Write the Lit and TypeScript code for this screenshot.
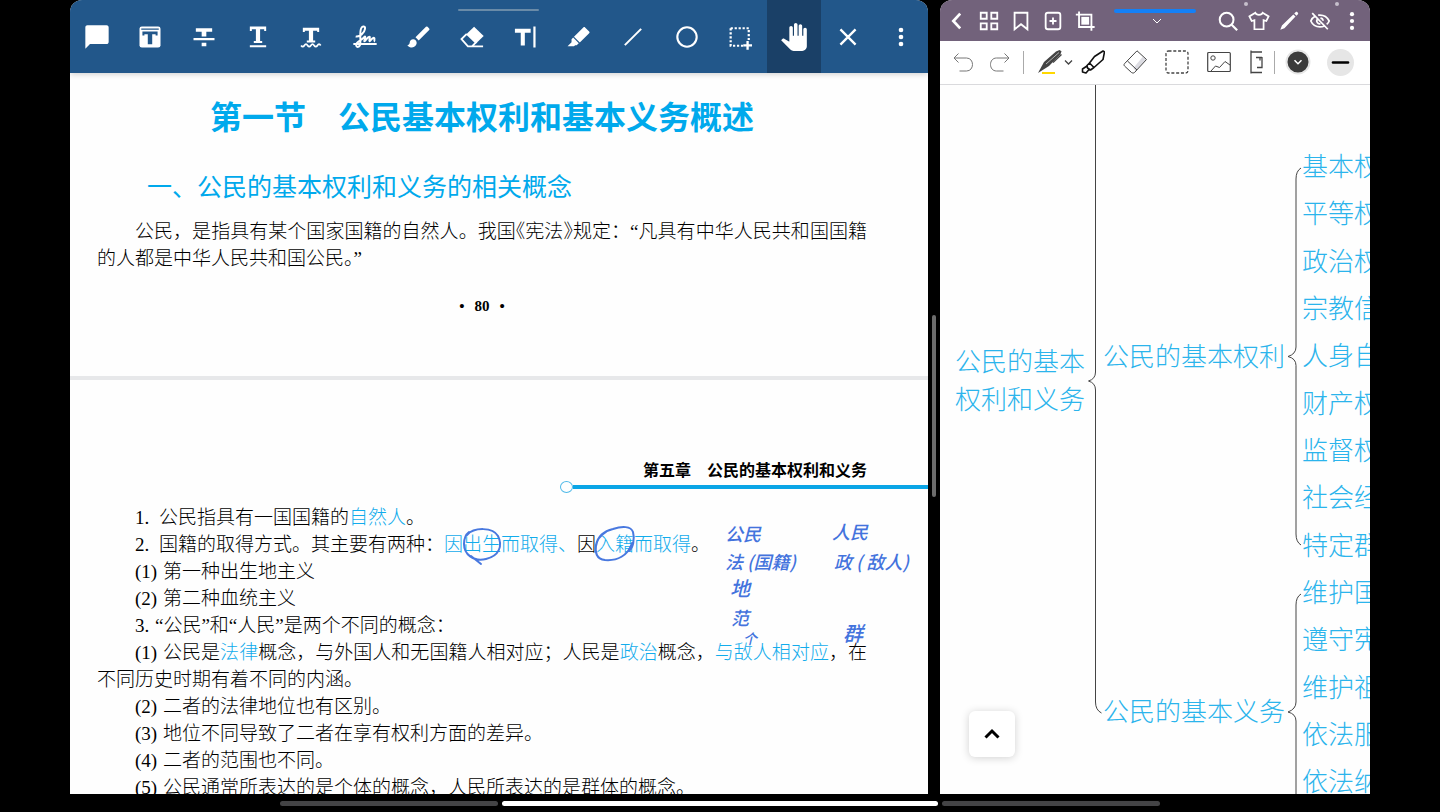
import { LitElement, html, svg, css } from "lit";
import { customElement, state } from "lit/decorators.js";

const markupTools = [
  { id: "note", label: "批注", icon: svg`<path class="fill" d="M20.2 2H3.8C2.8 2 2 2.8 2 3.8V22l4-4h14.2c1 0 1.8-.8 1.8-1.8V3.8c0-1-.8-1.8-1.8-1.8z"/>` },
  { id: "highlight-text", label: "高亮文本", icon: svg`<rect class="fill" x="3" y="3" width="18" height="18" rx="2"/><path class="cut" d="M4.500 4.800h15v1h-15zM5.500 7.200h13v3.600h-1.700V9.600h-2.900v8.600h-3.800V9.600H7.200v1.200H5.500z"/>` },
  { id: "strike", label: "删除线", icon: svg`<path class="fill" d="M5 4.500h14v3h-5v4h-4v-4H5zM3 12.8h18v2H3zM10 17h4v3h-4z"/>` },
  { id: "underline", label: "下划线", icon: svg`<path class="fill" d="M5 3h14v3.800h-1.700V5.300h-3.500v10.200h1.800v1.700H8.400v-1.700h1.800V5.300H6.700v1.500H5zM5 19h14v1.700H5z"/>` },
  { id: "squiggle", label: "波浪线", icon: svg`<path class="fill" d="M5 4h14v3.800h-1.700V6.600h-3.500V15h1.800v1.800H8.400V15h1.800V6.600H6.700v1.200H5z"/><path d="M3.500 19.200q1.400 2 2.800 0t2.800 0t2.800 0t2.800 0t2.800 0t2.800 0" stroke-width="1.500"/>` },
  { id: "sign", label: "签名", icon: svg`<path stroke-width="1.700" d="M4 11.500c3.500.8 7.500-3 8-6.500.3-2.200-2-2.800-3.200-.6C7.300 7.200 8.300 12 8 17c-.2 4.300-3.500 4.300-3.600 1.800C4.300 16 8 15.600 10.200 13.200c1-1.100 1.600-2 2-1.400.5.800-1.300 3.600-.8 3.900.8.400 2.800-4 4.300-4 1.200 0-.7 3.600.2 3.900.8.200 1.900-3 3.600-3 1.300.1-.2 2.700 1 3.400M2 18h20"/>` },
  { id: "brush", label: "画笔", icon: svg`<path class="fill" d="M7 14c-1.660 0-3 1.340-3 3 0 1.310-1.160 2-2 2 .92 1.220 2.490 2 4 2 2.210 0 4-1.790 4-4 0-1.660-1.340-3-3-3zm13.710-9.370l-1.340-1.340a1 1 0 0 0-1.410 0L9 12.250 11.750 15l8.960-8.960a1 1 0 0 0 0-1.410z"/>` },
  { id: "eraser", label: "橡皮擦", icon: svg`<path class="fill" d="M13.800 3.300 22 11.200l-6.800 6.600-8.300-8z"/><path d="M7.500 9.300 3 13.800 8.500 20H21.500M8 20h4l4-4" stroke-width="1.600"/>` },
  { id: "text", label: "文本", icon: svg`<path class="fill" d="M2.500 5h13.500v3.300h-5v11H7.500v-11h-5zM18.300 3h1.900v18h-1.900z"/>` },
  { id: "marker", label: "荧光笔", icon: svg`<path class="fill" d="M17.200 3.800 20.700 7.200c.5.500.5 1 0 1.500l-8 8-5-5 8-7.900c.5-.5 1-.5 1.500 0zM7 12.500l4.800 4.800-1.800 1.700-1.300 0L7.700 20H2.200L5.600 16.400v-2.400z"/>` },
  { id: "line", label: "直线", icon: svg`<path d="M5 19 19 5" stroke-width="1.700"/>` },
  { id: "shape", label: "圆形", icon: svg`<circle cx="12" cy="12" r="8.300" stroke-width="1.800"/>` },
  { id: "select", label: "区域选择", icon: svg`<path d="M4 4.500h15.500v10M4 4.500V19.500H15" stroke-width="1.900" stroke-dasharray="1.900 1.500"/><path d="M18.500 15.500v7.500M14.800 19.200h7.500" stroke-width="2"/>` },
  { id: "pan", label: "拖动", icon: svg`<path class="fill" d="M23 5.500V20c0 2.200-1.800 4-4 4h-7.300c-1.080 0-2.100-.43-2.850-1.190L1 14.830s1.260-1.230 1.300-1.250c.22-.19.49-.29.79-.29.22 0 .42.060.6.160.04.010 4.310 2.460 4.310 2.460V4c0-.83.670-1.500 1.500-1.500S11 3.170 11 4v7h1V1.500c0-.83.670-1.500 1.500-1.500S15 .67 15 1.500V11h1V2.500c0-.83.670-1.500 1.500-1.500s1.500.67 1.500 1.500V11h1V5.500c0-.83.670-1.500 1.500-1.500s1.500.67 1.500 1.500z"/>` },
  { id: "close", label: "关闭", icon: svg`<path d="M5.500 5.500 18.500 18.500M18.500 5.500 5.500 18.500" stroke-width="2"/>` },
  { id: "more", label: "更多", icon: svg`<circle class="fill" cx="12" cy="6" r="2"/><circle class="fill" cx="12" cy="12" r="2"/><circle class="fill" cx="12" cy="18" r="2"/>` },
];

@customElement("pdf-pane")
class PdfPane extends LitElement {
  static styles = css`
    :host {
      position: relative;
      display: flex;
      flex-direction: column;
      overflow: hidden;
      border-radius: 12px 12px 0 0;
      background: #fefefe;
      color: #000;
      font-family: "Liberation Serif", "Noto Sans CJK SC", serif;
    }
    .bar {
      display: flex;
      flex: none;
      height: 73px;
      background: #22578a;
      box-shadow: 0 1px 6px rgba(0, 0, 0, 0.2);
      z-index: 1;
    }
    .tool {
      flex: 1;
      display: grid;
      place-items: center;
      border: 0;
      padding: 0;
      background: none;
      color: #fff;
    }
    .tool.on { background: #1a4067; }
    .tool svg { width: 28px; height: 28px; fill: none; stroke: currentColor; }
    .fill { fill: currentColor; stroke: none; }
    .cut { fill: #22578a; stroke: none; }
    .grip {
      position: absolute;
      top: 9px;
      left: 388px;
      width: 81px;
      height: 2px;
      border-radius: 1px;
      background: #6a8ba8;
      z-index: 2;
    }
    .scroll { flex: 1; min-height: 0; overflow: hidden; }
    .page { position: relative; padding: 0 61px 0 27px; }
    .first { padding-top: 20px; padding-bottom: 60px; border-bottom: 4px solid #e7e8ea; }
    .second { padding-top: 81px; }
    h1, h2, p { margin: 0; font-family: "Noto Sans CJK SC", sans-serif; }
    h1 { text-align: center; font-size: 32px; line-height: 44px; font-weight: 700; color: #00a9ec; }
    h2 { margin-top: 31px; padding-left: 50px; font-size: 25px; line-height: 34px; font-weight: 400; color: #00a9ec; }
    p { font-family: inherit; font-size: 19px; line-height: 27px; text-indent: 38px; text-align: justify; font-weight: 300; }
    .lead { margin-top: 16px; }
    .half { font-feature-settings: "halt"; }
    .folio { margin-top: 24px; text-align: center; font-size: 15px; line-height: 20px; font-weight: 700; }
    .folio span { margin: 0 10px; }
    .chapter { text-align: right; font-size: 16px; line-height: 20px; font-weight: 700; }
    .rule { display: flex; align-items: center; width: 368px; height: 12px; margin: 0 -61px 11px auto; }
    .knob { box-sizing: border-box; width: 13px; height: 12px; border: 1px solid #4fb9e8; border-radius: 50%; }
    .stroke { flex: 1; height: 4px; background: #0aa5e6; }
    .num { display: inline-block; min-width: 28px; text-indent: 0; }
    .dot { min-width: 24px; }
    .near { min-width: 20px; }
    .key { color: #12acec; }
    .ink { position: absolute; color: #4373dd; font: italic 500 18px/24px "Noto Sans CJK SC", sans-serif; white-space: nowrap; }
    .small { font-size: 14px; }
    .big { font-size: 20px; }
    .ring { position: absolute; left: 390px; top: 142px; width: 180px; height: 48px; fill: none; stroke: #4878df; stroke-width: 2; stroke-linecap: round; }
  `;

  @state() active = "pan";

  notes = [
    { text: "公民", x: 655, y: 141, size: "" },
    { text: "法 (国籍)", x: 655, y: 169, size: "" },
    { text: "地", x: 660, y: 196, size: "big" },
    { text: "范", x: 661, y: 225, size: "" },
    { text: "个", x: 673, y: 246, size: "small" },
    { text: "人民", x: 762, y: 139, size: "" },
    { text: "政 ( 敌人)", x: 764, y: 169, size: "" },
    { text: "群", x: 773, y: 241, size: "big" },
  ];

  render() {
    return html`
      <span class="grip"></span>
      <div class="bar" role="toolbar" aria-label="批注工具">
        ${markupTools.map(
          (t) => html`<button class="tool ${t.id === this.active ? "on" : ""}" aria-label=${t.label} @click=${() => (this.active = t.id)}>
            <svg viewBox="0 0 24 24">${t.icon}</svg>
          </button>`
        )}
      </div>
      <div class="scroll" lang="zh-CN">
        <section class="page first">
          <h1>第一节　公民基本权利和基本义务概述</h1>
          <h2>一、公民的基本权利和义务的相关概念</h2>
          <p class="lead">公民，是指具有某个国家国籍的自然人。我国<span class="half">《</span>宪法<span class="half">》</span>规定：“凡具有中华人民共和国国籍的人都是中华人民共和国公民<span class="half">。</span>”</p>
          <div class="folio">•<span>80</span>•</div>
        </section>
        <section class="page second">
          <div class="chapter">第五章　公民的基本权利和义务</div>
          <div class="rule"><span class="knob"></span><span class="stroke"></span></div>
          <p><span class="num dot">1.</span>公民指具有一国国籍的<span class="key">自然人</span>。</p>
          <p><span class="num dot">2.</span>国籍的取得方式。其主要有两种：<span class="key">因出生而取得、</span>因<span class="key">入籍而取得</span>。</p>
          <p><span class="num">(1)</span>第一种出生地主义</p>
          <p><span class="num">(2)</span>第二种血统主义</p>
          <p><span class="num near">3.</span>“公民”和“人民”是两个不同的概念：</p>
          <p><span class="num">(1)</span>公民是<span class="key">法律</span>概念，与外国人和无国籍人相对应；人民是<span class="key">政治</span>概念，<span class="key">与敌人相对应</span>，在不同历史时期有着不同的内涵。</p>
          <p><span class="num">(2)</span>二者的法律地位也有区别。</p>
          <p><span class="num">(3)</span>地位不同导致了二者在享有权利方面的差异。</p>
          <p><span class="num">(4)</span>二者的范围也不同。</p>
          <p><span class="num">(5)</span>公民通常所表达的是个体的概念，人民所表达的是群体的概念。</p>
          <svg class="ring" viewBox="0 0 180 48">
            <path d="M7 13C14 5 33 5 38 14c5 10 1 20-12 23C13 40 4 32 4 22 4 17 5 13 9 10M11 34l10 8"/>
            <path d="M172 21C168 34 157 39 145 38c-9-1-10-8-9-15 2-9 8-14 17-16 9-3 18-3 20 3 2 7 0 16-4 19M146 10c-5 3-9 7-10 14"/>
          </svg>
          ${this.notes.map((n) => html`<span class="ink ${n.size}" style="left:${n.x}px;top:${n.y}px">${n.text}</span>`)}
        </section>
      </div>
    `;
  }
}

const headLeft = [
  { label: "返回", icon: svg`<path d="M15.500 4 8 12l7.500 8" stroke-width="3"/>` },
  { label: "缩略图", icon: svg`<path d="M3 3h6.500v6.500H3zM14.500 3H21v6.500h-6.500zM3 14.500h6.500V21H3zM14.500 14.500H21V21h-6.500z" stroke-width="2"/>` },
  { label: "书签", icon: svg`<path d="M5 3h14v18l-7-5.500L5 21z" stroke-width="2"/>` },
  { label: "添加", icon: svg`<rect x="4" y="3" width="16" height="18" rx="2.500" stroke-width="2"/><path d="M12 8.200v7.600M8.200 12h7.600" stroke-width="2"/>` },
  { label: "裁剪", icon: svg`<path d="M5.500 1.500V18.500H22.500M2 5H19v17.500" stroke-width="2"/><path class="fill" d="M8 7.500h8.500V16H8z"/>` },
];

const headRight = [
  { label: "搜索", icon: svg`<circle cx="10.500" cy="10.500" r="7.500" stroke-width="2.200"/><path d="M16 16l6 6" stroke-width="2.400"/>` },
  { label: "主题", icon: svg`<path d="M8 3 1.500 7l2.500 5 3-1v10h10V11l3 1 2.500-5L16 3c-1 3-7 3-8 0z" stroke-width="1.900"/>` },
  { label: "编辑", icon: svg`<path class="fill" d="m2.500 21.500 1.800-4.700L16.700 4.800l2.400 2.400L7 19.800zM17.700 3.800l1.700-1.500c.7-.6 1.300-.4 1.800.1l.5.500c.5.600.5 1.200 0 1.800l-1.500 1.600z"/>` },
  { label: "隐藏", icon: svg`<path d="M7 6.500C4.500 7.800 2.800 9.800 2 12c2 4.500 5.500 6.500 10 6.500 1.800 0 3.400-.4 4.800-1.100M10 5.600c5.500-.6 9.800 1.800 12 6.400-.6 1.500-1.500 2.700-2.700 3.700M9 10c-1.600 2.500.5 5.500 3.500 5M12.500 8.800c1.800.2 2.800 1.400 2.900 3M3.500 3.500l17 17.500" stroke-width="1.900"/>` },
  { label: "更多", icon: svg`<circle class="fill" cx="12" cy="4.500" r="2.300"/><circle class="fill" cx="12" cy="12" r="2.300"/><circle class="fill" cx="12" cy="19.500" r="2.300"/>` },
];

const COL = 362;
const ROWS = ["基本权", "平等权", "政治权", "宗教信", "人身自", "财产权", "监督权", "社会经", "特定群", "维护国", "遵守宪", "维护祖", "依法服", "依法纳"];

@customElement("note-pane")
class NotePane extends LitElement {
  static styles = css`
    :host {
      position: relative;
      display: flex;
      flex-direction: column;
      overflow: hidden;
      border-radius: 12px 12px 0 0;
      background: #fefefe;
      font-family: "Noto Sans CJK SC", sans-serif;
    }
    button { display: grid; place-items: center; border: 0; padding: 0; background: none; color: inherit; }
    svg { fill: none; stroke: currentColor; }
    .fill { fill: currentColor; stroke: none; }
    .head { display: flex; flex: none; align-items: center; height: 41px; padding: 0 2px 0 1px; background: #72627b; color: #fff; }
    .head button { width: 32px; height: 41px; }
    .head svg { width: 22px; height: 22px; }
    .head .title { flex: 1; width: auto; }
    .head .title svg { width: 10px; height: 10px; }
    .head .tight { width: 30px; }
    .tab { position: absolute; top: 9px; left: 174px; width: 82px; height: 4px; border-radius: 2px; background: #1480f6; }
    .pip { position: absolute; top: 2px; right: 122px; width: 4px; height: 4px; border-radius: 2px; background: #c6bfcb; }
    .pip.b { right: 31px; }
    .tools {
      display: flex;
      flex: none;
      align-items: center;
      box-sizing: border-box;
      height: 44px;
      padding: 0 4px 1px;
      border-bottom: 1px solid #dadadd;
      background: #fff;
      color: #444;
    }
    .tools button { flex: none; width: 42px; height: 42px; }
    .tools .step { width: 37px; }
    .tools .wide { width: 35px; }
    .tools .slim { width: 32px; }
    .tools svg { width: 24px; height: 24px; }
    .tools .pen { width: 36px; height: 28px; }
    .tools .rulr { width: 14px; }
    .sep { width: 1px; height: 23px; margin: 0 2px; background: #aaa; }
    .sep.lead { margin: 0 13px 0 5px; }
    .tools .color svg { width: 26px; height: 26px; }
    .tools .weight svg { width: 27px; height: 27px; }
    .canvas { position: relative; flex: 1; min-height: 0; overflow: hidden; color: #2bb4ec; font-weight: 300; font-size: 26px; line-height: 38px; white-space: nowrap; }
    .node { position: absolute; }
    .lines { position: absolute; left: 0; top: 0; width: 430px; height: 709px; color: #444; }
    .up { position: absolute; left: 29px; bottom: 37px; width: 46px; height: 46px; border-radius: 6px; background: #fff; color: #000; box-shadow: 0 1px 8px rgba(0, 0, 0, 0.18); }
    .up svg { width: 18px; height: 18px; }
  `;

  nodes = [
    { text: html`公民的基本<br />权利和义务`, x: 15, y: 256 },
    { text: "公民的基本权利", x: 163, y: 251 },
    { text: "公民的基本义务", x: 163, y: 606 },
    ...ROWS.map((text, i) => ({ text, x: COL, y: 61 + Math.round(i * 47.33) })),
  ];

  render() {
    const btn = (t: any, cls = "") => html`<button class=${cls} aria-label=${t.label}><svg viewBox="0 0 24 24">${t.icon}</svg></button>`;
    return html`
      <header class="head">
        ${headLeft.map((t) => btn(t))}
        <button class="title" aria-label="文档标题"><svg viewBox="0 0 10 10"><path d="M1 3l4 4 4-4"/></svg></button>
        ${headRight.map((t, i) => btn(t, i === 2 || i === 1 ? "tight" : ""))}
        <span class="tab"></span><span class="pip"></span><span class="pip b"></span>
      </header>
      <div class="tools" role="toolbar" aria-label="书写工具">
        <button class="step" aria-label="撤销"><svg viewBox="0 0 24 24"><path stroke="#777" d="M7.500 3.500 3 8l4.500 4.500M3 8h12.500c8 0 8 13 0 13H8.500"/></svg></button>
        <button class="step" aria-label="重做"><svg viewBox="0 0 24 24"><path stroke="#777" d="M16.500 3.500 21 8l-4.500 4.500M21 8H8.500c-8 0-8 13 0 13h7"/></svg></button>
        <span class="sep lead"></span>
        <button class="wide" aria-label="钢笔"><svg class="pen" viewBox="0 0 36 28"><path stroke="#ffd800" stroke-width="2" d="M5 25h13"/><path fill="#444" stroke="none" d="M1 25 7 14 19 3.500 22.500 2l2 1.300-1 3L12 18z"/><path stroke="#fff" stroke-width=".6" d="M9 16 22 4.500"/><path stroke-width="1.300" d="M16 14.500l8.500-8M28 12.500l3.500 3.500 3.500-3.500"/></svg></button>
        <button aria-label="荧光笔"><svg viewBox="0 0 24 24"><path stroke="#111" stroke-width="1.600" stroke-linejoin="round" d="M22 1 23.500 2 22 9.500 13 17.500 8.500 13 13.500 6.500zM8.500 13 6 15.500 6.500 18l3 2 3.500-2.500M6 16l-4.500 3v3L5 23l3-3.500"/></svg></button>
        <button aria-label="橡皮擦"><svg viewBox="0 0 24 24"><path fill="#dcdce2" stroke="none" d="M23 9.500 12.500 21l-2-3 9-11z"/><path d="M14 .8 23.500 9.500 11.500 22.500c-1 .8-2 .6-3 0L1.500 16c-.7-.8-.6-1.600 0-2.300zM4.500 11l9.500 9"/></svg></button>
        <button aria-label="套索"><svg viewBox="0 0 24 24"><rect x="1" y="1" width="22" height="22" rx="2.500" stroke-width="1.300" stroke-dasharray="3 1.800"/></svg></button>
        <button aria-label="图片"><svg viewBox="0 0 24 24"><rect x=".7" y="2.500" width="22.600" height="19" rx="1" stroke-width="1.200"/><circle cx="6" cy="8" r="2.200"/><path d="M4 21l4.500-5 4 1.500 5.500-6 5 3.500"/></svg></button>
        <button class="slim" aria-label="尺子"><svg class="rulr" viewBox="0 0 14 24"><path stroke-width="1.300" d="M13 2H2v20.500h11M2 .500v3M2 20.500v3M7 7.500h6M13 7v10.500H8M11 7.500v3"/></svg></button>
        <span class="sep"></span>
        <button class="color" aria-label="颜色"><svg viewBox="0 0 26 26"><circle cx="13" cy="13" r="11.500" fill="#3b3b3b" stroke="#e6e6e6" stroke-width="2"/><path d="M9.500 11.200 13 14.700 16.500 11.200" stroke="#fff" stroke-width="1.500"/></svg></button>
        <button class="weight" aria-label="粗细"><svg viewBox="0 0 27 27"><circle cx="13.500" cy="13.500" r="13.500" fill="#e6e6e6" stroke="none"/><path d="M6 13.500h15" stroke="#000" stroke-width="2.600" stroke-linecap="round"/></svg></button>
      </div>
      <div class="canvas" lang="zh-CN">
        <svg class="lines" viewBox="0 0 430 709">
          <path d="M155.500 0V287q0 7-7 9q7 2 7 9V617q0 8 6 11"/>
          <path d="M361 83q-5 3-5 11V262q0 7-8 9.500q8 2 8 9V449q0 8 5 11"/>
          <path d="M361 509q-5 3-5 11V617q0 7-8 10q8 2 8 9V709"/>
        </svg>
        ${this.nodes.map((n) => html`<div class="node" style="left:${n.x}px;top:${n.y}px">${n.text}</div>`)}
      </div>
      <button class="up" aria-label="向上"><svg viewBox="0 0 18 18"><path d="M2.500 12.500 9 6l6.500 6.500" stroke-width="3"/></svg></button>
    `;
  }
}

@customElement("app-root")
class AppRoot extends LitElement {
  static styles = css`
    :host { display: flex; flex-direction: column; height: 100vh; background: #000; overflow: hidden; }
    .split { display: flex; flex: 1; min-height: 0; padding: 0 70px; }
    pdf-pane { flex: 858 1 0; min-width: 0; }
    note-pane { flex: 430 1 0; min-width: 0; }
    .divider { display: flex; align-items: center; justify-content: center; width: 12px; }
    .handle { width: 4px; height: 182px; margin-top: 18px; border-radius: 2px; background: #6c6c6c; }
    .home { display: flex; flex: none; justify-content: center; align-items: center; gap: 4px; height: 18px; }
    .side { width: 218px; height: 5px; border-radius: 3px; background: #434345; }
    .main { width: 436px; height: 5px; border-radius: 3px; background: #fff; }
  `;

  render() {
    return html`
      <main class="split">
        <pdf-pane></pdf-pane>
        <div class="divider"><span class="handle"></span></div>
        <note-pane></note-pane>
      </main>
      <div class="home"><span class="side"></span><span class="main"></span><span class="side"></span></div>
    `;
  }
}
